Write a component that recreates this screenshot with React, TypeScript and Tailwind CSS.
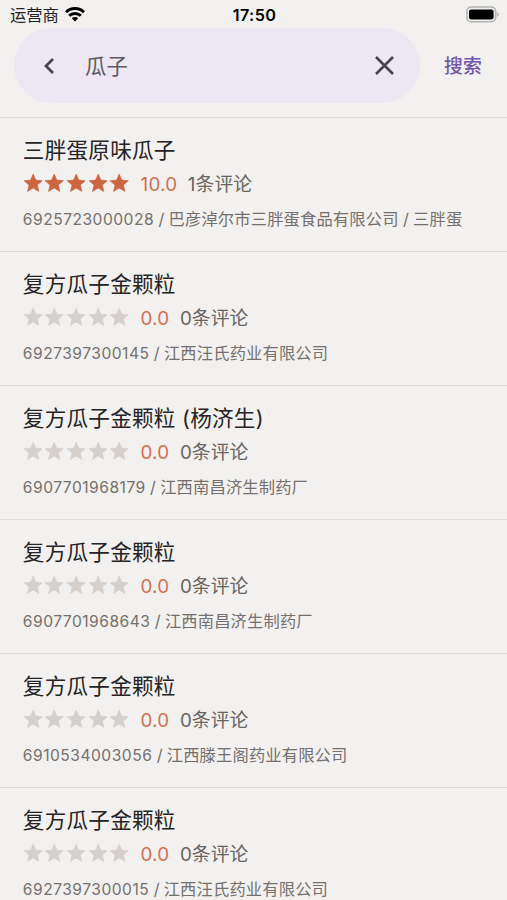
import React from "react";

type Product = {
  name: string;
  rating: string;
  stars: number;
  reviews: number;
  code: string;
  details: string[];
};

const products: Product[] = [
  { name: "三胖蛋原味瓜子", rating: "10.0", stars: 5, reviews: 1, code: "6925723000028", details: ["巴彦淖尔市三胖蛋食品有限公司", "三胖蛋"] },
  { name: "复方瓜子金颗粒", rating: "0.0", stars: 0, reviews: 0, code: "6927397300145", details: ["江西汪氏药业有限公司"] },
  { name: "复方瓜子金颗粒 (杨济生)", rating: "0.0", stars: 0, reviews: 0, code: "6907701968179", details: ["江西南昌济生制药厂"] },
  { name: "复方瓜子金颗粒", rating: "0.0", stars: 0, reviews: 0, code: "6907701968643", details: ["江西南昌济生制药厂"] },
  { name: "复方瓜子金颗粒", rating: "0.0", stars: 0, reviews: 0, code: "6910534003056", details: ["江西滕王阁药业有限公司"] },
  { name: "复方瓜子金颗粒", rating: "0.0", stars: 0, reviews: 0, code: "6927397300015", details: ["江西汪氏药业有限公司"] },
];

function Star({ filled }: { filled: boolean }) {
  return (
    <svg
      viewBox="2 2 20 19"
      className={`h-[17.5px] w-[18.4px] stroke-[0.7] ${filled ? "fill-[#cb6542] stroke-[#cb6542]" : "fill-[#d6d0cd] stroke-[#d6d0cd]"}`}
    >
      <path d="M12 17.27 18.18 21l-1.64-7.03L22 9.24l-7.19-.61L12 2 9.19 8.63 2 9.24l5.46 4.73L5.82 21z" />
    </svg>
  );
}

function StatusBar() {
  return (
    <header className="grid h-7 grid-cols-3 items-center pr-2 pl-2.5">
      <div className="flex items-center gap-1.5 text-[16.3px] leading-7 text-[#222]">
        <span className="pt-px">运营商</span>
        <svg viewBox="0 0 20 15" className="h-[15px] w-5 fill-none stroke-black stroke-[3]">
          <path d="M1 5.3a12.8 12.8 0 0 1 18 0M4.2 8.8a8.2 8.2 0 0 1 11.6 0" />
          <path d="m10 14.5-3.2-3.2a4.6 4.6 0 0 1 6.4 0z" className="fill-black stroke-none" />
        </svg>
      </div>
      <span className="text-center text-[16.2px] leading-7 font-semibold tracking-[0.4px] text-black">17:50</span>
      <svg viewBox="0 0 34 17" className="h-[17px] w-[34px] justify-self-end">
        <rect x="1.9" y="1" width="28.8" height="14.8" rx="4.3" fill="none" stroke="#b3b2b0" strokeWidth="1.6" />
        <rect x="4" y="3.4" width="24.6" height="10" rx="2.2" fill="#000" />
        <path d="M32.2 6.3q1.6.5 1.6 2.2t-1.6 2.2z" fill="#b3b2b0" />
      </svg>
    </header>
  );
}

function ProductRow({ product }: { product: Product }) {
  return (
    <li className="h-[134px] border-t-[1.5px] border-[#dfdddc] px-[22.8px] pt-4">
      <h2 className="h-8 text-[21.6px] leading-8 tracking-[0.25px] text-[#252323]">{product.name}</h2>
      <div className="mt-px flex h-8 items-center text-[18.8px] leading-8">
        <div className="flex gap-[3.2px] pl-px">
          {[0, 1, 2, 3, 4].map((i) => (
            <Star key={i} filled={i < product.stars} />
          ))}
        </div>
        <span className="ml-3 pt-[3px] tracking-[0.25px] text-[#d1704f]">{product.rating}</span>
        <span className="ml-[10.5px] pt-[3px] tracking-[0.1px] text-[#686461]">{product.reviews}条评论</span>
      </div>
      <p className="mt-1 h-8 text-[16.3px] leading-8 tracking-[0.15px] whitespace-pre text-[#74706e]">
        <span className="text-[15.6px] tracking-[0.5px]">{product.code}</span>
        {product.details.map((detail) => (
          <React.Fragment key={detail}>
            <span className="tracking-[-0.2px]"> / </span>
            {detail}
          </React.Fragment>
        ))}
      </p>
    </li>
  );
}

export default function App() {
  return (
    <main className="h-[900px] w-[507px] overflow-hidden bg-[#f3f1ef] font-['Inter','Noto_Sans_CJK_SC',sans-serif]">
      <StatusBar />
      <div className="flex h-[89px] items-start pl-3.5">
        <div className="flex h-[75px] w-[406px] items-center rounded-full bg-[#ede7f3] pr-[26px] pl-[29px]">
          <svg viewBox="0 0 12 16" className="h-4 w-3 fill-none stroke-[#48434d] stroke-[2.7]">
            <path d="m10 1-7 7 7 7" />
          </svg>
          <span className="ml-[30px] flex-1 text-[21.4px] leading-8 tracking-[0.2px] text-[#5e5964]">瓜子</span>
          <svg viewBox="0 0 19 19" className="h-[19px] w-[19px] fill-none stroke-[#48434d] stroke-[2.6]">
            <path d="m1 1 17 17M18 1 1 18" />
          </svg>
        </div>
        <button className="ml-6 h-[75px] pt-1 text-[18.8px] font-medium tracking-[0.2px] text-[#7056ae]">搜索</button>
      </div>
      <ul>
        {products.map((p) => (
          <ProductRow key={p.code} product={p} />
        ))}
      </ul>
    </main>
  );
}
